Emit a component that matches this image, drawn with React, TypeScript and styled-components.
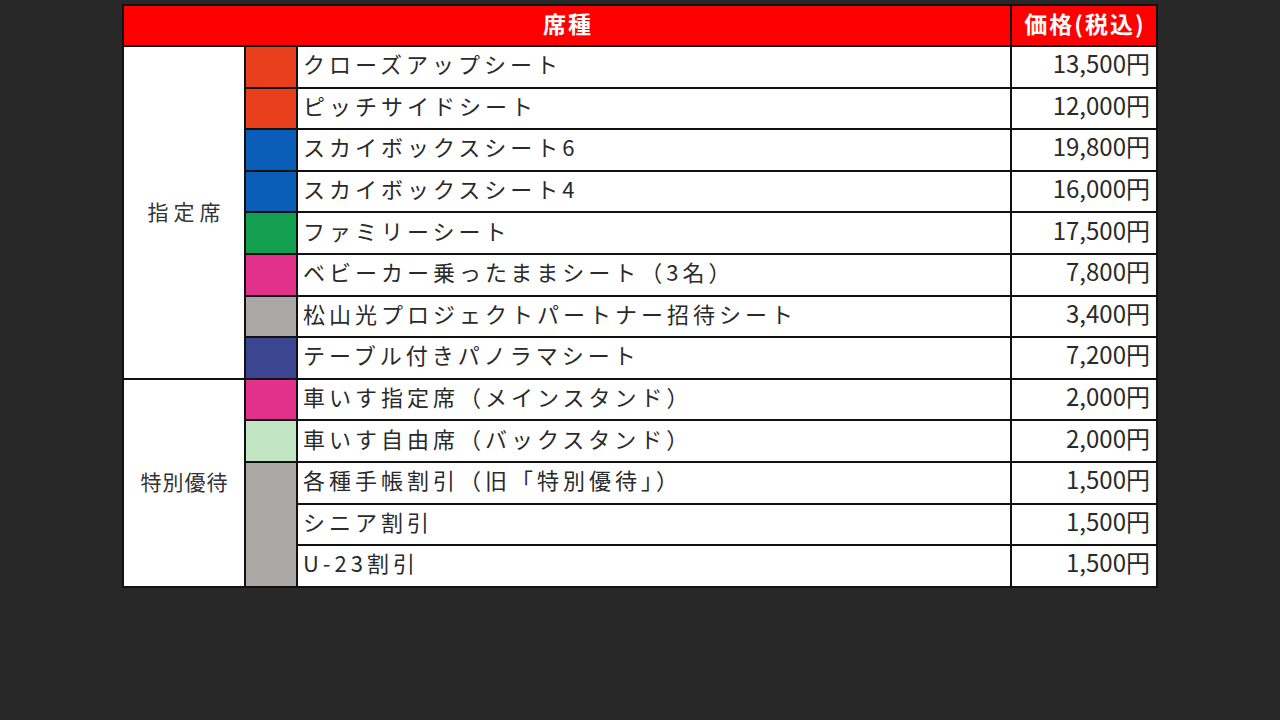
import React from 'react';
import styled, {createGlobalStyle} from 'styled-components';

const GlobalStyle = createGlobalStyle`
  html, body {
    margin: 0;
    padding: 0;
    background: #282828;
  }
  body {
    font-family: "Noto Sans CJK JP", "Noto Sans", sans-serif;
  }
`;

const Page = styled.div`
  width: 1280px;
  height: 720px;
  display: flex;
  justify-content: center;
  align-items: flex-start;
  padding-top: 4px;
  box-sizing: border-box;
  background: #282828;
`;

const Table = styled.table`
  width: 1034px;
  border-collapse: collapse;
  background: #fff;
  border: 2px solid #111;
  table-layout: fixed;
`;

const HeadRow = styled.tr`
  height: 41px;
`;

const HeadCell = styled.th`
  background: #ff0000;
  color: #fff;
  font-weight: 700;
  font-size: 23px;
  letter-spacing: 2px;
  padding: 0 0 5px 2px;
  line-height: 1;
  border: 2px solid #111;
`;

const Row = styled.tr`
  height: 41.6px;
`;

const GroupCell = styled.td<{$spacing: number}>`
  font-size: 21px;
  color: #333;
  text-align: center;
  vertical-align: middle;
  border: 2px solid #111;
  padding: 0 0 2px ${p => p.$spacing}px;
  line-height: 1;
  letter-spacing: ${p => p.$spacing}px;
`;

const Swatch = styled.td<{$color: string; $noTop?: boolean}>`
  background: ${p => p.$color};
  border-left: 2px solid #111;
  border-right: 2px solid #111;
  border-top: ${p => (p.$noTop ? 'none' : '2px solid #111')};
  border-bottom: 2px solid #111;
  padding: 0;
`;

const NameCell = styled.td`
  font-size: 22px;
  letter-spacing: 4px;
  color: #2a2a2a;
  border: 2px solid #111;
  padding: 0 0 7px 5px;
  line-height: 1;
  white-space: nowrap;
`;

const PriceCell = styled.td`
  font-size: 24px;
  color: #2a2a2a;
  text-align: right;
  border: 2px solid #111;
  padding: 0 6px 7px 0;
  line-height: 1;
  white-space: nowrap;
`;

type Seat = {
  name: string;
  price: string;
  color?: string;
  span?: number;
  noTop?: boolean;
};

const reserved: Seat[] = [
  {name: 'クローズアップシート', price: '13,500円', color: '#e8401c'},
  {name: 'ピッチサイドシート', price: '12,000円', color: '#e8401c'},
  {name: 'スカイボックスシート6', price: '19,800円', color: '#0a5eb8'},
  {name: 'スカイボックスシート4', price: '16,000円', color: '#0a5eb8'},
  {name: 'ファミリーシート', price: '17,500円', color: '#12a050', noTop: true},
  {name: 'ベビーカー乗ったままシート（3名）', price: '7,800円', color: '#e2318a'},
  {name: '松山光プロジェクトパートナー招待シート', price: '3,400円', color: '#a9a8a4'},
  {name: 'テーブル付きパノラマシート', price: '7,200円', color: '#3b4590'},
];

const special: Seat[] = [
  {name: '車いす指定席（メインスタンド）', price: '2,000円', color: '#e2318a'},
  {name: '車いす自由席（バックスタンド）', price: '2,000円', color: '#c2e5c4', noTop: true},
  {name: '各種手帳割引（旧「特別優待」）', price: '1,500円', color: '#a9a8a4', span: 3},
  {name: 'シニア割引', price: '1,500円'},
  {name: 'U-23割引', price: '1,500円'},
];

const Group: React.FC<{label: string; spacing: number; seats: Seat[]}> = ({label, spacing, seats}) => (
  <>
    {seats.map((s, i) => (
      <Row key={s.name}>
        {i === 0 && <GroupCell $spacing={spacing} rowSpan={seats.length}>{label}</GroupCell>}
        {s.color && <Swatch $color={s.color} $noTop={s.noTop} rowSpan={s.span ?? 1}/>}
        <NameCell>{s.name}</NameCell>
        <PriceCell>{s.price}</PriceCell>
      </Row>
    ))}
  </>
);

export default function App() {
  return (
    <Page>
      <GlobalStyle/>
      <Table>
        <colgroup>
          <col style={{width: 122}}/>
          <col style={{width: 52}}/>
          <col style={{width: 714}}/>
          <col style={{width: 146}}/>
        </colgroup>
        <thead>
          <HeadRow>
            <HeadCell colSpan={3}>席種</HeadCell>
            <HeadCell>価格(税込)</HeadCell>
          </HeadRow>
        </thead>
        <tbody>
          <Group label="指定席" spacing={5} seats={reserved}/>
          <Group label="特別優待" spacing={1} seats={special}/>
        </tbody>
      </Table>
    </Page>
  );
}
